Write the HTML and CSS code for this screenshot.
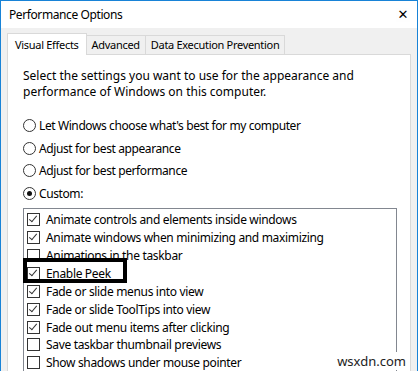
FILE: index.html
```html
<!DOCTYPE html>
<html>
<head>
  <title>Performance Options</title>
  <link rel="stylesheet" href="styles.css">
</head>
<body>
  <div class="window">
    <div class="titlebar">
      <span class="title">Performance Options</span>
      <span class="close">✕</span>
    </div>
    <div class="dialog">
      <div class="tabs">
        <div class="tab active">Visual Effects</div>
        <div class="tab">Advanced</div>
        <div class="tab">Data Execution Prevention</div>
      </div>
      <div class="panel">
        <div class="intro">
          <div>Select the settings you want to use for the appearance and</div>
          <div>performance of Windows on this computer.</div>
        </div>
        <div class="options">
          <label class="radio"><span class="dot"></span>Let Windows choose what's best for my computer</label>
          <label class="radio"><span class="dot"></span>Adjust for best appearance</label>
          <label class="radio"><span class="dot"></span>Adjust for best performance</label>
          <label class="radio"><span class="dot on"></span>Custom:</label>
        </div>
        <div class="listbox">
          <div class="item"><span class="box on"></span>Animate controls and elements inside windows</div>
          <div class="item"><span class="box on"></span>Animate windows when minimizing and maximizing</div>
          <div class="item"><span class="box"></span>Animations in the taskbar</div>
          <div class="item"><span class="box on"></span>Enable Peek<span class="highlight"></span></div>
          <div class="item"><span class="box on"></span>Fade or slide menus into view</div>
          <div class="item"><span class="box on"></span>Fade or slide ToolTips into view</div>
          <div class="item"><span class="box on"></span>Fade out menu items after clicking</div>
          <div class="item"><span class="box"></span>Save taskbar thumbnail previews</div>
          <div class="item"><span class="box"></span>Show shadows under mouse pointer</div>
        </div>
      </div>
    </div>
    <div class="watermark">wsxdn.com</div>
  </div>
</body>
</html>
```

FILE: styles.css
```css
body {
  margin: 0;
  background: #fff;
  font-family: "Noto Sans", sans-serif;
  font-size: 12px;
  color: #000;
}
.window {
  position: relative;
  width: 418px;
  height: 371px;
  box-sizing: border-box;
  border: 1px solid #1883d7;
  border-bottom: none;
  overflow: hidden;
  display: flex;
  flex-direction: column;
}
.titlebar {
  height: 27px;
  background: #fff;
  display: flex;
  align-items: center;
  padding: 0 0 0 8px;
  flex-shrink: 0;
}
.title {
  flex: 1;
  font-size: 12px;
  letter-spacing: -0.4px;
}
.close {
  width: 14px;
  margin-right: 7px;
  font-family: "DejaVu Sans", sans-serif;
  font-size: 13px;
  line-height: 14px;
  text-align: center;
  color: #000;
  background: #fefefe;
}
.dialog {
  flex: 1;
  background: #f0f0f0;
  padding: 5px 6px 0 6px;
  display: flex;
  flex-direction: column;
}
.tabs {
  display: flex;
  align-items: flex-end;
  height: 21px;
  position: relative;
  z-index: 1;
}
.tab {
  height: 19px;
  box-sizing: border-box;
  padding: 0 5px;
  border: 1px solid #d9d9d9;
  border-left: none;
  border-bottom: none;
  background: #f0f0f0;
  line-height: 18px;
  font-size: 11px;
  letter-spacing: -0.3px;
}
.tab.active {
  height: 22px;
  margin-bottom: -1px;
  background: #fff;
  border-left: 1px solid #d9d9d9;
  padding: 2px 7px 0 7px;
}
.panel {
  flex: 1;
  background: #fff;
  border: 1px solid #d9d9d9;
  border-bottom: none;
  padding: 13px 15px 0 15px;
}
.intro {
  line-height: 16px;
}
.options {
  margin-top: 14px;
  display: flex;
  flex-direction: column;
}
.radio {
  display: flex;
  align-items: center;
  height: 22.7px;
  letter-spacing: -0.4px;
}
.dot {
  width: 11px;
  height: 11px;
  border: 1px solid #333;
  border-radius: 50%;
  margin-right: 3px;
  position: relative;
  flex-shrink: 0;
}
.dot.on::after {
  content: "";
  position: absolute;
  left: 3px;
  top: 3px;
  width: 5px;
  height: 5px;
  border-radius: 50%;
  background: #111;
}
.listbox {
  margin-top: 3px;
  width: 372px;
  border: 1px solid #828790;
  border-bottom: none;
  padding-top: 2px;
  height: 200px;
}
.item {
  position: relative;
  display: flex;
  align-items: center;
  height: 17.9px;
  padding-left: 3px;
  white-space: nowrap;
  letter-spacing: -0.33px;
}
.box {
  width: 11px;
  height: 11px;
  border: 1px solid #333;
  margin-right: 6px;
  position: relative;
  flex-shrink: 0;
}
.box.on::after {
  content: "";
  position: absolute;
  left: 3px;
  top: 0px;
  width: 3px;
  height: 7px;
  border: solid #333;
  border-width: 0 1px 1px 0;
  transform: rotate(40deg);
}
.highlight {
  position: absolute;
  left: -1px;
  top: -6px;
  width: 104px;
  height: 25px;
  box-sizing: border-box;
  border: 4px solid #000;
}
.watermark {
  position: absolute;
  right: 9px;
  bottom: 1px;
  font-size: 13px;
  color: #222;
  background: #fff;
  padding: 0 2px;
}
```
